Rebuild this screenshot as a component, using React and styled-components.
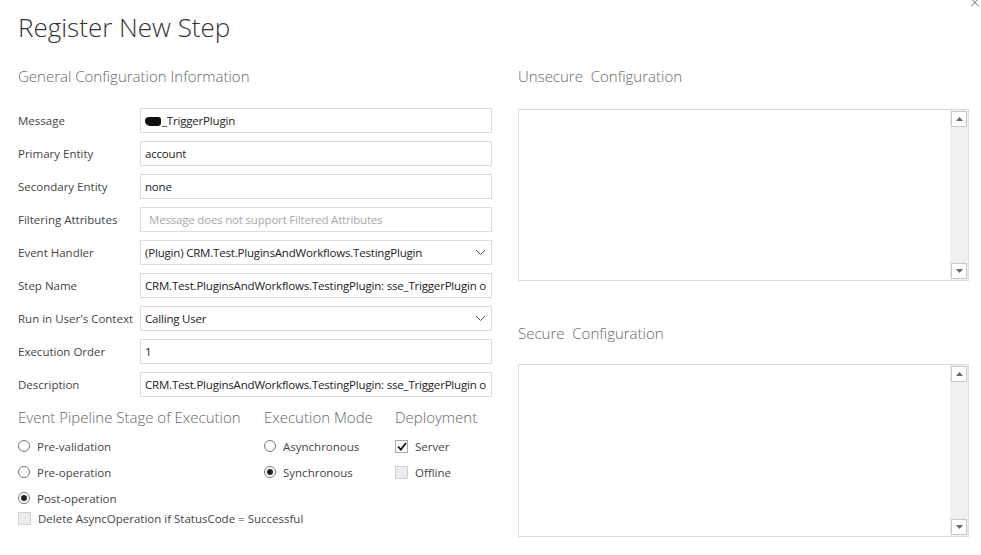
import React from "react"
import styled, { createGlobalStyle } from "styled-components"

const GlobalStyle = createGlobalStyle`
  html, body {
    margin: 0;
    padding: 0;
    background: #fff;
  }
  body {
    font-family: "Open Sans", "Noto Sans", sans-serif;
    color: #444;
  }
`

const Page = styled.div`
  position: relative;
  width: 981px;
  height: 555px;
  overflow: hidden;
  padding: 0 0 0 18px;
  box-sizing: border-box;
`

const CloseButton = styled.span`
  position: absolute;
  top: -10px;
  right: 1px;
  font-size: 18px;
  font-weight: 300;
  color: #777;
`

const Title = styled.h1`
  margin: 0;
  padding-top: 10px;
  font-size: 26px;
  font-weight: 300;
  line-height: 34px;
  color: #333;
`

const Columns = styled.div`
  display: flex;
  gap: 26px;
  margin-top: 22px;
`

const LeftColumn = styled.div`
  width: 474px;
`

const RightColumn = styled.div`
  width: 451px;
`

const SectionHeading = styled.h2`
  margin: 0;
  margin-top: ${p => p.$gap || 0}px;
  font-size: 15px;
  font-weight: 300;
  line-height: 20px;
  color: #666;
  white-space: pre;
`

const FormGrid = styled.div`
  display: grid;
  grid-template-columns: 122px 352px;
  row-gap: 8px;
  margin-top: 22px;
`

const Label = styled.div`
  display: flex;
  align-items: center;
  height: 25px;
  font-size: 11.5px;
  color: #444;
  white-space: nowrap;
`

const Field = styled.div`
  display: flex;
  align-items: center;
  height: 25px;
  box-sizing: border-box;
  border: 1px solid #dcdcdc;
  padding: 0 5px;
  padding-left: ${p => (p.$placeholder ? "8px" : "4px")};
  font-size: 11.5px;
  letter-spacing: -0.19px;
  color: ${p => (p.$placeholder ? "#a8a8a8" : "#222")};
  white-space: nowrap;
  overflow: hidden;
`

const FieldText = styled.span`
  flex: 1;
  overflow: hidden;
`

const Redacted = styled.span`
  display: inline-block;
  width: 16px;
  height: 9px;
  margin-right: 1px;
  vertical-align: -1px;
  background: #111;
  border-radius: 5px 3px 4px 6px;
`

const Chevron = () => (
  <svg width="11" height="7" viewBox="0 0 11 7">
    <path d="M1 1l4.5 4.5L10 1" fill="none" stroke="#555" strokeWidth="1" />
  </svg>
)

const OptionsArea = styled.div`
  display: flex;
  margin-top: 10px;
`

const OptionGroup = styled.div`
  width: ${p => p.$width}px;
`

const GroupHeading = styled(SectionHeading)`
  margin-bottom: 6px;
`

const OptionRow = styled.div`
  display: flex;
  align-items: center;
  gap: 7px;
  height: ${p => p.$height || 26}px;
  font-size: 11.5px;
  color: #444;
  white-space: nowrap;
`

const Radio = styled.span`
  position: relative;
  width: 12px;
  height: 12px;
  box-sizing: border-box;
  border: 1px solid #777;
  border-radius: 50%;
  flex-shrink: 0;

  &::after {
    content: "";
    display: ${p => (p.$checked ? "block" : "none")};
    position: absolute;
    left: 2px;
    top: 2px;
    width: 6px;
    height: 6px;
    border-radius: 50%;
    background: #222;
  }
`

const Checkbox = styled.span`
  display: flex;
  align-items: center;
  justify-content: center;
  width: 13px;
  height: 13px;
  box-sizing: border-box;
  border: 1px solid ${p => (p.$checked ? "#aaa" : "#d0d0d0")};
  background: ${p => (p.$checked ? "#fff" : "#ececec")};
  flex-shrink: 0;
`

const Check = () => (
  <svg width="10" height="9" viewBox="0 0 10 9">
    <path d="M1 4.5l2.8 3L9 1" fill="none" stroke="#111" strokeWidth="1.8" />
  </svg>
)

const ConfigBox = styled.div`
  display: flex;
  justify-content: flex-end;
  height: ${p => p.$height}px;
  margin-top: ${p => p.$offset}px;
  box-sizing: border-box;
  border: 1px solid #dcdcdc;
`

const ScrollTrack = styled.div`
  display: flex;
  flex-direction: column;
  justify-content: space-between;
  width: 18px;
  background: #f0f0f0;
`

const ScrollButton = styled.div`
  display: flex;
  align-items: center;
  justify-content: center;
  width: 16px;
  height: 16px;
  margin: 1px 1px;
  box-sizing: border-box;
  border: 1px solid #c8c8c8;
  background: #fff;
`

const Arrow = ({ down }) => (
  <svg width="7" height="4" viewBox="0 0 7 4">
    <path d={down ? "M0 0h7L3.5 4z" : "M0 4h7L3.5 0z"} fill="#666" />
  </svg>
)

const fields = [
  { label: "Message", value: "_TriggerPlugin", redacted: true },
  { label: "Primary Entity", value: "account" },
  { label: "Secondary Entity", value: "none" },
  { label: "Filtering Attributes", value: "Message does not support Filtered Attributes", placeholder: true },
  { label: "Event Handler", value: "(Plugin) CRM.Test.PluginsAndWorkflows.TestingPlugin", select: true },
  { label: "Step Name", value: "CRM.Test.PluginsAndWorkflows.TestingPlugin: sse_TriggerPlugin of account" },
  { label: "Run in User's Context", value: "Calling User", select: true },
  { label: "Execution Order", value: "1" },
  { label: "Description", value: "CRM.Test.PluginsAndWorkflows.TestingPlugin: sse_TriggerPlugin of account" },
]

const ConfigPanel = ({ height, offset }) => (
  <ConfigBox $height={height} $offset={offset}>
    <ScrollTrack>
      <ScrollButton>
        <Arrow />
      </ScrollButton>
      <ScrollButton>
        <Arrow down />
      </ScrollButton>
    </ScrollTrack>
  </ConfigBox>
)

export default function App() {
  return (
    <Page>
      <GlobalStyle />
      <CloseButton>×</CloseButton>
      <Title>Register New Step</Title>
      <Columns>
        <LeftColumn>
          <SectionHeading>General Configuration Information</SectionHeading>
          <FormGrid>
            {fields.map(f => (
              <React.Fragment key={f.label}>
                <Label>{f.label}</Label>
                <Field $placeholder={f.placeholder}>
                  <FieldText>
                    {f.redacted && <Redacted />}
                    {f.value}
                  </FieldText>
                  {f.select && <Chevron />}
                </Field>
              </React.Fragment>
            ))}
          </FormGrid>
          <OptionsArea>
            <OptionGroup $width={246}>
              <GroupHeading>Event Pipeline Stage of Execution</GroupHeading>
              <OptionRow>
                <Radio />
                Pre-validation
              </OptionRow>
              <OptionRow>
                <Radio />
                Pre-operation
              </OptionRow>
              <OptionRow $height={26}>
                <Radio $checked />
                Post-operation
              </OptionRow>
              <OptionRow $height={14}>
                <Checkbox />
                Delete AsyncOperation if StatusCode = Successful
              </OptionRow>
            </OptionGroup>
            <OptionGroup $width={131}>
              <GroupHeading>Execution Mode</GroupHeading>
              <OptionRow>
                <Radio />
                Asynchronous
              </OptionRow>
              <OptionRow>
                <Radio $checked />
                Synchronous
              </OptionRow>
            </OptionGroup>
            <OptionGroup $width={97}>
              <GroupHeading>Deployment</GroupHeading>
              <OptionRow>
                <Checkbox $checked>
                  <Check />
                </Checkbox>
                Server
              </OptionRow>
              <OptionRow>
                <Checkbox />
                Offline
              </OptionRow>
            </OptionGroup>
          </OptionsArea>
        </LeftColumn>
        <RightColumn>
          <SectionHeading>{"Unsecure  Configuration"}</SectionHeading>
          <ConfigPanel height={172} offset={23} />
          <SectionHeading $gap={42}>{"Secure  Configuration"}</SectionHeading>
          <ConfigPanel height={173} offset={21} />
        </RightColumn>
      </Columns>
    </Page>
  )
}
